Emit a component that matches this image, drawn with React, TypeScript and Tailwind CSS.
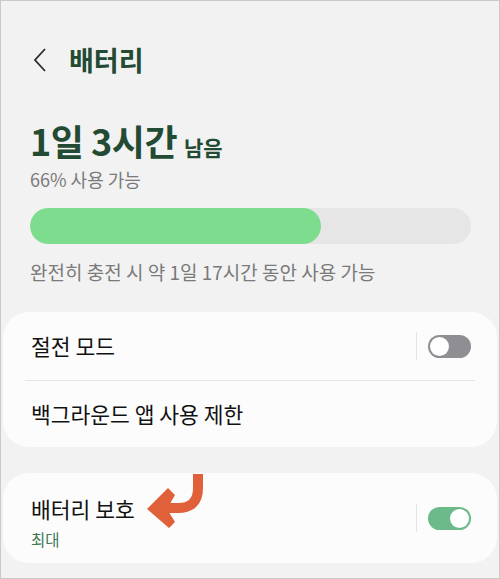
import React from "react";

const Toggle = ({ on }: { on: boolean }) => (
  <div className="flex items-center gap-[11px]">
    <div className="w-px h-[28px] bg-[#e4e4e4]" />
    <div
      className={
        on
          ? "w-[43px] h-[23px] rounded-full bg-[#6cb98a] flex items-center justify-end p-[2px]"
          : "w-[43px] h-[23px] rounded-full bg-[#8e8e93] flex items-center justify-start p-[2px]"
      }
    >
      <div className="w-[19px] h-[19px] rounded-full bg-white" />
    </div>
  </div>
);

const Arrow = () => (
  <svg
    className="absolute left-[143px] top-[1px]"
    width="64"
    height="54"
    viewBox="0 0 64 54"
  >
    <path
      d="M54 0 L54 14 Q54 34 34 34 L20 34"
      fill="none"
      stroke="#e0603a"
      strokeWidth="10"
    />
    <polygon points="3,35 24,14 31,21 23,35 31,48 25,54" fill="#e0603a" />
  </svg>
);

export default function App() {
  return (
    <div
      className="w-[500px] h-[579px] bg-[#f2f2f2] border border-[#c9c9c9] overflow-hidden flex flex-col"
      style={{ fontFamily: '"Noto Sans CJK KR", "Noto Sans", sans-serif' }}
    >
      <div className="h-[40px] mt-[39px] px-[30px] flex items-center">
        <svg width="16" height="26" viewBox="0 0 16 26" className="ml-[1px]">
          <path
            d="M13 2 L3 13 L13 24"
            fill="none"
            stroke="#2a2a2a"
            strokeWidth="1.8"
          />
        </svg>
        <span className="ml-[21px] text-[27px] leading-[40px] font-bold text-[#234a33]">
          배터리
        </span>
      </div>

      <div className="px-[29px]">
        <div className="mt-[40px] h-[40px] flex items-baseline gap-[7px] text-[#234a33] font-bold">
          <span className="text-[36px] leading-[40px] tracking-[-0.5px]">1일 3시간</span>
          <span className="text-[21px] leading-[40px]">남음</span>
        </div>
        <div className="mt-[8px] text-[18px] leading-[22px] text-[#7a7a7a]">
          66% 사용 가능
        </div>
        <div className="mt-[18px] h-[36px] w-[441px] rounded-full bg-[#e6e6e6] overflow-hidden">
          <div className="h-full w-[66%] rounded-full bg-[#7ddc8e]" />
        </div>
        <div className="mt-[17px] text-[19px] leading-[22px] text-[#7a7a7a]">
          완전히 충전 시 약 1일 17시간 동안 사용 가능
        </div>
      </div>

      <div className="mt-[29px] mx-[2px] bg-[#fcfcfc] rounded-[26px] flex flex-col">
        <div className="h-[68px] pl-[28px] pr-[26px] flex items-center justify-between">
          <span className="text-[21.5px] text-[#111]">절전 모드</span>
          <Toggle on={false} />
        </div>
        <div className="mx-[22px] h-px bg-[#e6e6e6]" />
        <div className="h-[66px] pl-[28px] flex items-center">
          <span className="text-[21.5px] text-[#111]">백그라운드 앱 사용 제한</span>
        </div>
      </div>

      <div className="mt-[26px] mx-[2px] h-[90px] bg-[#fcfcfc] rounded-[26px] pl-[28px] pr-[26px] flex items-center justify-between">
        <div className="flex flex-col pt-[7px]">
          <span className="text-[21.5px] leading-[28px] text-[#111]">배터리 보호</span>
          <span className="mt-[6px] text-[15.5px] leading-[20px] text-[#3d7a52]">최대</span>
        </div>
        <Toggle on={true} />
      </div>
      <div className="relative">
        <div className="absolute left-0 top-[-90px] w-full h-[90px] pointer-events-none">
          <Arrow />
        </div>
      </div>
    </div>
  );
}
